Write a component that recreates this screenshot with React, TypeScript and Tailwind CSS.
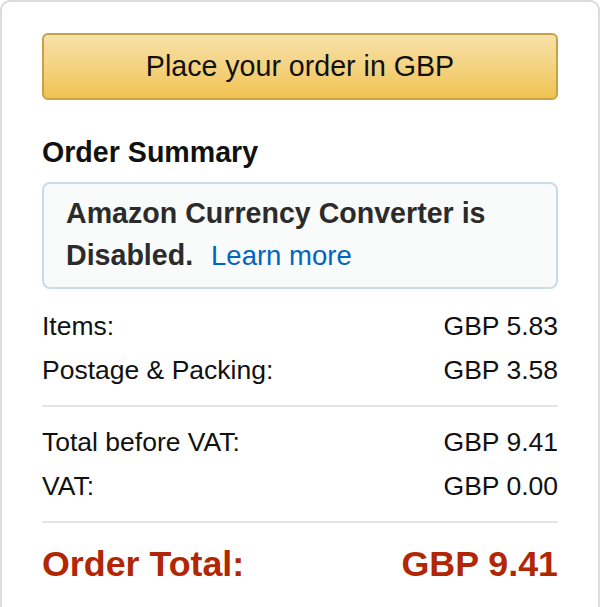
const rows = [
  { label: 'Items:', value: 'GBP 5.83' },
  { label: 'Postage & Packing:', value: 'GBP 3.58' },
];

const vatRows = [
  { label: 'Total before VAT:', value: 'GBP 9.41' },
  { label: 'VAT:', value: 'GBP 0.00' },
];

function SummaryRow({ label, value }: { label: string; value: string }) {
  return (
    <div className="flex justify-between text-[26.5px] leading-[44px] text-[#111]">
      <span>{label}</span>
      <span>{value}</span>
    </div>
  );
}

export default function App() {
  return (
    <div className="h-[607px] w-[600px] overflow-hidden bg-white font-['Liberation_Sans',Arial,sans-serif]">
      <div className="h-[640px] rounded-[10px] border-2 border-[#dcdcdc] px-[40px] pt-[31px]">
        {/* Place order button */}
        <button className="flex h-[67px] w-full items-center justify-center rounded-[6px] border-2 border-[#c7a047] bg-gradient-to-b from-[#f8e2a9] to-[#f0c24f] text-[28.6px] text-[#111]">
          Place your order in GBP
        </button>

        <h3 className="mt-[32px] text-[28.6px] font-bold leading-[40px] text-[#111]">Order Summary</h3>

        {/* Currency converter notice */}
        <div className="mt-[10px] rounded-[8px] border-2 border-[#c9dce8] bg-[#f9fafa] pl-[22px] pr-[16px] pt-[8px] pb-[10px] text-[28.6px] font-bold leading-[42px] text-[#2b2b2b]">
          Amazon Currency Converter is
          <br />
          Disabled.{' '}
          <a className="ml-[10px] text-[27.5px] font-normal text-[#0066c0]">Learn more</a>
        </div>

        <div className="mt-[15px]">
          {rows.map((r) => (
            <SummaryRow key={r.label} {...r} />
          ))}
        </div>

        <div className="mt-[13px] h-[2px] bg-[#e3e3e3]" />

        <div className="mt-[13px]">
          {vatRows.map((r) => (
            <SummaryRow key={r.label} {...r} />
          ))}
        </div>

        <div className="mt-[13px] h-[2px] bg-[#e3e3e3]" />

        <div className="mt-[17px] flex justify-between text-[35.8px] font-bold leading-[48px] text-[#b12704]">
          <span>Order Total:</span>
          <span>GBP 9.41</span>
        </div>
      </div>
    </div>
  );
}
